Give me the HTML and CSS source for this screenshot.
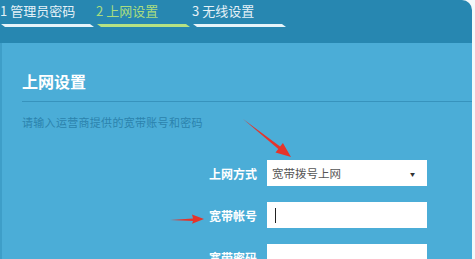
FILE: index.html
```html
<!DOCTYPE html>
<html lang="zh-CN">
<head>
  <meta charset="UTF-8">
  <meta name="viewport" content="width=device-width, initial-scale=1.0">
  <title>上网设置</title>
  <link rel="stylesheet" href="styles.css">
</head>
<body>
  <div class="page">
    <div class="header">
      <div class="steps">
        <div class="step">
          <div class="step-name">1 管理员密码</div>
          <div class="step-bar"></div>
        </div>
        <div class="step active">
          <div class="step-name">2 上网设置</div>
          <div class="step-bar"></div>
        </div>
        <div class="step">
          <div class="step-name">3 无线设置</div>
          <div class="step-bar"></div>
        </div>
      </div>
    </div>

    <div class="panel">
      <h2 class="panel-title">上网设置</h2>
      <p class="panel-hint">请输入运营商提供的宽带账号和密码</p>

      <div class="form">
        <div class="form-row">
          <label class="form-label">上网方式</label>
          <div class="field select">
            <span>宽带拨号上网</span>
            <span class="caret">▼</span>
          </div>
        </div>
        <div class="form-row">
          <label class="form-label">宽带帐号</label>
          <div class="field"><span class="cursor"></span></div>
        </div>
        <div class="form-row">
          <label class="form-label">宽带密码</label>
          <div class="field"></div>
        </div>
      </div>
    </div>
  </div>

  <!-- red annotation arrows drawn over the screenshot -->
  <svg class="marks" width="475" height="259" viewBox="0 0 475 259">
    <polygon points="243,119 280.1,146.5 282.9,143 291,157 275.5,152.4 278.3,148.9" fill="#e5342b"/>
    <polygon points="170,220 193,218.4 192,214.5 204,219 192,223.8 193,221" fill="#e5342b"/>
  </svg>
</body>
</html>
```

FILE: styles.css
```css
body {
  margin: 0;
  width: 475px;
  height: 259px;
  overflow: hidden;
  position: relative;
  background: #f4f8fa;
  font-family: "Noto Sans CJK SC", "Noto Sans", sans-serif;
}

.page {
  width: 472px;
  height: 259px;
  display: flex;
  flex-direction: column;
}

/* step tabs */
.header {
  height: 43px;
  flex: none;
  background: #2787b1;
  border-top-right-radius: 10px;
  overflow: hidden;
}

.steps {
  display: flex;
  margin-left: -2px;
  padding-top: 2px;
}

.step {
  width: 96px;
}

.step-name {
  font-size: 13px;
  line-height: 18px;
  color: #e4f1f7;
  padding-left: 2px;
  white-space: nowrap;
}

.step-bar {
  height: 3px;
  margin: 4px 0 0 3px;
  background: #e6f4fa;
  clip-path: polygon(0 0, calc(100% - 4px) 0, 100% 100%, 4px 100%);
}

.step.active .step-name {
  color: #a9dd7f;
}

.step.active .step-bar {
  background: #b6e283;
}

/* content panel */
.panel {
  flex: 1;
  background: #4badd7;
  border-left: 2px solid #3e9ec8;
  padding: 27px 0 0 20px;
}

.panel-title {
  margin: 0;
  font-size: 16px;
  line-height: 22px;
  font-weight: bold;
  color: #fff;
  padding-bottom: 9px;
  border-bottom: 1px solid #3793bd;
}

.panel-hint {
  margin: 12px 0 0;
  font-size: 11px;
  line-height: 16px;
  color: #2c83ad;
  letter-spacing: 0.3px;
}

.form {
  margin-top: 30px;
  display: flex;
  flex-direction: column;
  gap: 16px;
}

.form-row {
  display: flex;
  align-items: center;
}

.form-label {
  width: 235px;
  margin-right: 10px;
  text-align: right;
  font-size: 12px;
  font-weight: bold;
  color: #fff;
}

.field {
  width: 160px;
  height: 26px;
  background: #fff;
  display: flex;
  align-items: center;
  padding-left: 8px;
  box-sizing: border-box;
}

.select {
  padding: 0 12px 0 5px;
  justify-content: space-between;
  font-size: 11.5px;
  color: #555;
}

.caret {
  font-size: 5px;
  color: #333;
}

.cursor {
  width: 1px;
  height: 15px;
  background: #222;
}

.marks {
  position: absolute;
  top: 0;
  left: 0;
  pointer-events: none;
}
```
